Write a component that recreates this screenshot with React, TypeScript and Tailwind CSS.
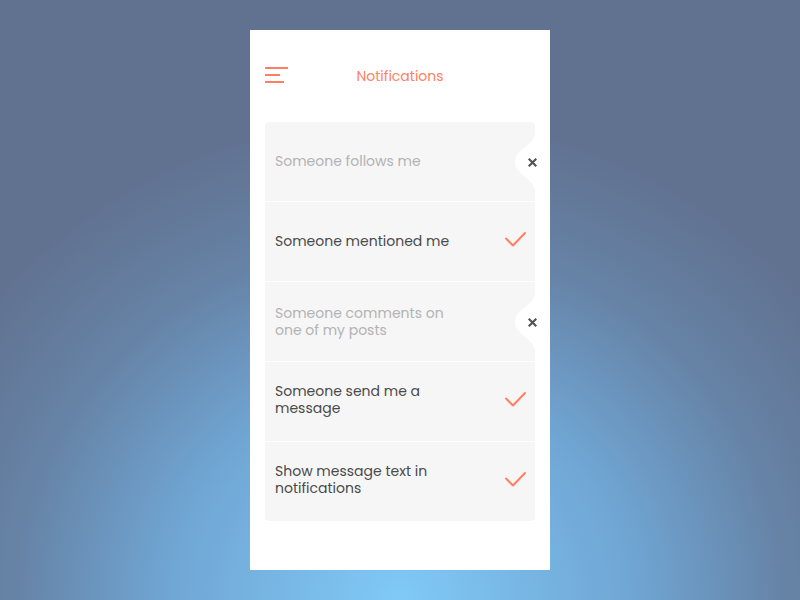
import React from 'react'

const rows = [
  { label: 'Someone follows me', on: false, shift: false },
  { label: 'Someone mentioned me', on: true, shift: false },
  { label: 'Someone comments on one of my posts', on: false, shift: false },
  { label: 'Someone send me a message', on: true, shift: true },
  { label: 'Show message text in notifications', on: true, shift: true },
]

function Check() {
  return (
    <svg width="22" height="16" viewBox="0 0 22 16" fill="none" stroke="#ff7f62" strokeWidth="2" strokeLinecap="round" strokeLinejoin="round" className="-mt-[5px] -mr-[1px]">
      <path d="M2 7.5 L9 14.5 L21 2" />
    </svg>
  )
}

function Notch() {
  return (
    <div className="absolute right-0 top-1/2 -translate-y-1/2 h-[60px] w-[20px]">
      <svg width="20" height="60" viewBox="0 0 20 60" className="absolute inset-0">
        <path d="M20 0 C20 14 0 17 0 30 C0 43 20 46 20 60 Z" fill="#ffffff" />
      </svg>
      <svg width="9" height="9" viewBox="0 0 9 9" className="absolute left-[13px] top-[26px]" stroke="#555" strokeWidth="2.2" strokeLinecap="square">
        <path d="M1.5 1.5 L7.5 7.5 M7.5 1.5 L1.5 7.5" />
      </svg>
    </div>
  )
}

export default function App() {
  return (
    <div
      className="w-full h-screen pt-[30px] bg-[radial-gradient(ellipse_80%_100%_at_50%_100%,#80c9f7_0%,#70a6d4_36%,#6683a6_60%,#617190_82%)]"
      style={{ fontFamily: 'Poppins, "Open Sans", "Noto Sans", sans-serif' }}
    >
      <div className="mx-auto w-[300px] h-[540px] bg-white px-[15px]">
        {/* header */}
        <div className="relative h-[92px] flex items-center justify-center">
          <div className="absolute left-0 top-[37px] flex flex-col gap-[5px]">
            <div className="h-[2px] w-[23px] bg-[#ff7f62]" />
            <div className="h-[2px] w-[15px] bg-[#ff7f62]" />
            <div className="h-[2px] w-[19px] bg-[#ff7f62]" />
          </div>
          <span className="text-[14px] text-[#ff7f62] pt-[1px]">Notifications</span>
        </div>

        {/* list */}
        <div className="flex flex-col gap-px bg-white">
          {rows.map((r) => (
            <div key={r.label} className="relative h-[79px] bg-[#f6f6f6] first:rounded-t-[4px] last:rounded-b-[4px] flex items-center justify-between pl-[10px] pr-[10px]">
              <span className={`text-[14px] leading-[17px] max-w-[180px] ${r.shift ? '-mt-[4px]' : ''} ${r.on ? 'text-[#4a4a4a]' : 'text-[#b3b3b3]'}`}>
                {r.label}
              </span>
              {r.on ? <Check /> : <Notch />}
            </div>
          ))}
        </div>
      </div>
    </div>
  )
}
